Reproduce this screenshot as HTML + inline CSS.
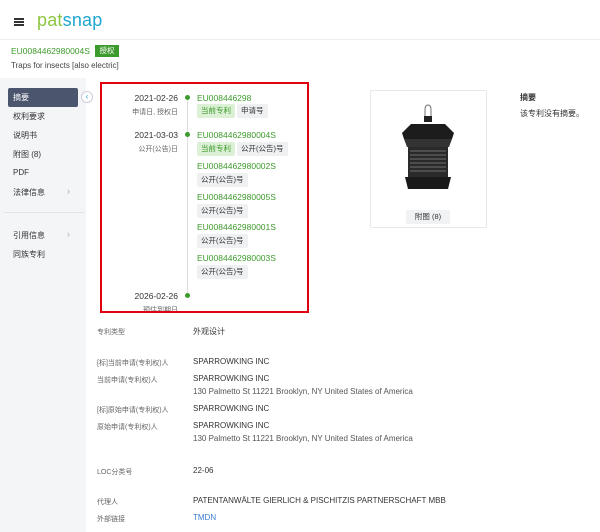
<!DOCTYPE html>
<html><head><meta charset="utf-8"><style>
*{margin:0;padding:0;box-sizing:border-box}
body{width:600px;height:532px;overflow:hidden;background:#fff;font-family:"Liberation Sans","Noto Sans CJK SC",sans-serif;color:#333;position:relative;font-size:8px}
.a{position:absolute;white-space:nowrap}
.g{color:#3d9a2c}
.tag{position:absolute;height:14px;line-height:14px;padding:0 4px;background:#eef0f2;border-radius:2px;font-size:7.5px;color:#333}
.tag.c{background:#dcf0d5;color:#3d9a2c}
.d{position:absolute;left:185px;width:5px;height:5px;border-radius:50%;background:#3d9a2c}
.lb{color:#666;font-size:7px}
</style></head><body>
<div class="a" style="left:0;top:0;width:600px;height:40px;background:#fff;border-bottom:1px solid #eceef0"></div>
<div class="a" style="left:14px;top:18px;width:10px;height:1.5px;background:#333;box-shadow:0 3px 0 #333,0 6px 0 #333"></div>
<div class="a" style="left:37px;top:10px;font-size:18px;letter-spacing:0.2px;color:#8cc63f">pat<span style="color:#1fa7d1">snap</span></div>
<div class="a g" style="left:11px;top:46px;font-size:8.5px">EU0084462980004S</div>
<div class="a" style="left:95px;top:45px;width:24px;height:12px;background:#3d9a2c;color:#fff;font-size:7.5px;line-height:12px;text-align:center">授权</div>
<div class="a" style="left:11px;top:61px;font-size:8px;color:#444">Traps for insects [also electric]</div>
<div class="a" style="left:0;top:78px;width:86px;height:454px;background:#f4f5f7"></div>
<div class="a" style="left:8px;top:88px;width:70px;height:19px;background:#4b566e;border-radius:2px"></div>
<div class="a" style="left:13px;top:92px;color:#fff;font-size:8px">摘要</div>
<div class="a" style="left:81px;top:91px;width:12px;height:12px;border-radius:50%;background:#fff;border:1px solid #ccd;color:#1fa7d1;font-size:8px;line-height:10px;text-align:center">‹</div>
<div class="a" style="left:13px;top:111px;font-size:8px">权利要求</div>
<div class="a" style="left:13px;top:130px;font-size:8px">说明书</div>
<div class="a" style="left:13px;top:149px;font-size:8px">附图 (8)</div>
<div class="a" style="left:13px;top:168px;font-size:8px">PDF</div>
<div class="a" style="left:13px;top:187px;font-size:8px">法律信息</div>
<div class="a" style="left:67px;top:186px;color:#aaa;font-size:9px">›</div>
<div class="a" style="left:4px;top:212px;width:80px;height:1px;background:#e2e4e8"></div>
<div class="a" style="left:13px;top:230px;font-size:8px">引用信息</div>
<div class="a" style="left:67px;top:229px;color:#aaa;font-size:9px">›</div>
<div class="a" style="left:13px;top:249px;font-size:8px">同族专利</div>

<div class="a" style="left:100px;top:82px;width:209px;height:231px;border:2px solid #e0000f"></div>
<div class="a" style="left:186.5px;top:97px;width:1px;height:198px;background:#ddd"></div>
<div class="a" style="left:110px;top:93px;width:68px;text-align:right;font-size:8.5px">2021-02-26</div>
<div class="a lb" style="left:110px;top:107px;width:68px;text-align:right">申请日, 授权日</div>
<div class="d" style="top:95px"></div>
<div class="a g" style="left:197px;top:93px;font-size:8.5px">EU008446298</div>
<div class="tag c" style="left:197px;top:104px">当前专利</div>
<div class="tag" style="left:237px;top:104px">申请号</div>
<div class="a" style="left:110px;top:130px;width:68px;text-align:right;font-size:8.5px">2021-03-03</div>
<div class="a lb" style="left:110px;top:144px;width:68px;text-align:right">公开(公告)日</div>
<div class="d" style="top:132px"></div>
<div class="a g" style="left:197px;top:130px;font-size:8.5px">EU0084462980004S</div>
<div class="tag c" style="left:197px;top:142px">当前专利</div>
<div class="tag" style="left:237px;top:142px">公开(公告)号</div>
<div class="a g" style="left:197px;top:161px;font-size:8.5px">EU0084462980002S</div>
<div class="tag" style="left:197px;top:173px">公开(公告)号</div>
<div class="a g" style="left:197px;top:192px;font-size:8.5px">EU0084462980005S</div>
<div class="tag" style="left:197px;top:204px">公开(公告)号</div>
<div class="a g" style="left:197px;top:222px;font-size:8.5px">EU0084462980001S</div>
<div class="tag" style="left:197px;top:234px">公开(公告)号</div>
<div class="a g" style="left:197px;top:253px;font-size:8.5px">EU0084462980003S</div>
<div class="tag" style="left:197px;top:265px">公开(公告)号</div>
<div class="a" style="left:110px;top:291px;width:68px;text-align:right;font-size:8.5px">2026-02-26</div>
<div class="a lb" style="left:110px;top:305px;width:68px;text-align:right;height:6px;overflow:hidden">预估到期日</div>
<div class="d" style="top:293px"></div>

<div class="a" style="left:370px;top:90px;width:117px;height:138px;border:1px solid #e6e8eb;border-radius:2px"></div>
<svg class="a" style="left:398px;top:103px" width="60" height="88" viewBox="0 0 60 88">
<path d="M30 2 Q27 2 27 7 L27 14 M30 2 Q33 2 33 7 L33 14" stroke="#888" fill="none" stroke-width="1.2"/>
<rect x="26" y="13" width="8" height="6" fill="#222"/>
<path d="M13 21 L47 21 L56 30 L54 36 L6 36 L4 30 Z" fill="#1c1c1c"/>
<path d="M6 36 L54 36 L51 44 L9 44 Z" fill="#333"/>
<rect x="10" y="44" width="40" height="30" fill="#2a2a2a"/>
<g stroke="#888" stroke-width="0.8"><line x1="12" y1="48" x2="48" y2="48"/><line x1="12" y1="52" x2="48" y2="52"/><line x1="12" y1="56" x2="48" y2="56"/><line x1="12" y1="60" x2="48" y2="60"/><line x1="12" y1="64" x2="48" y2="64"/><line x1="12" y1="68" x2="48" y2="68"/></g>
<path d="M7 74 L53 74 L50 86 L10 86 Z" fill="#1a1a1a"/>
</svg>
<div class="a" style="left:406px;top:210px;width:44px;height:14px;background:#f1f2f4;text-align:center;line-height:14px;font-size:7.5px">附图 (8)</div>
<div class="a" style="left:520px;top:92px;font-size:8px;font-weight:bold">摘要</div>
<div class="a" style="left:520px;top:108px;font-size:8px">该专利没有摘要。</div>

<div class="a lb" style="left:97px;top:327px">专利类型</div>
<div class="a" style="left:193px;top:326px">外观设计</div>
<div class="a lb" style="left:97px;top:358px">[标]当前申请(专利权)人</div>
<div class="a" style="left:193px;top:357px">SPARROWKING INC</div>
<div class="a lb" style="left:97px;top:375px">当前申请(专利权)人</div>
<div class="a" style="left:193px;top:374px">SPARROWKING INC</div>
<div class="a" style="left:193px;top:387px;color:#555">130 Palmetto St 11221 Brooklyn, NY United States of America</div>
<div class="a lb" style="left:97px;top:405px">[标]原始申请(专利权)人</div>
<div class="a" style="left:193px;top:404px">SPARROWKING INC</div>
<div class="a lb" style="left:97px;top:422px">原始申请(专利权)人</div>
<div class="a" style="left:193px;top:421px">SPARROWKING INC</div>
<div class="a" style="left:193px;top:434px;color:#555">130 Palmetto St 11221 Brooklyn, NY United States of America</div>
<div class="a lb" style="left:97px;top:467px">LOC分类号</div>
<div class="a" style="left:193px;top:466px">22-06</div>
<div class="a lb" style="left:97px;top:497px">代理人</div>
<div class="a" style="left:193px;top:496px">PATENTANWÄLTE GIERLICH &amp; PISCHITZIS PARTNERSCHAFT MBB</div>
<div class="a lb" style="left:97px;top:514px">外部链接</div>
<div class="a" style="left:193px;top:513px;color:#3f7fd0">TMDN</div>
</body></html>
